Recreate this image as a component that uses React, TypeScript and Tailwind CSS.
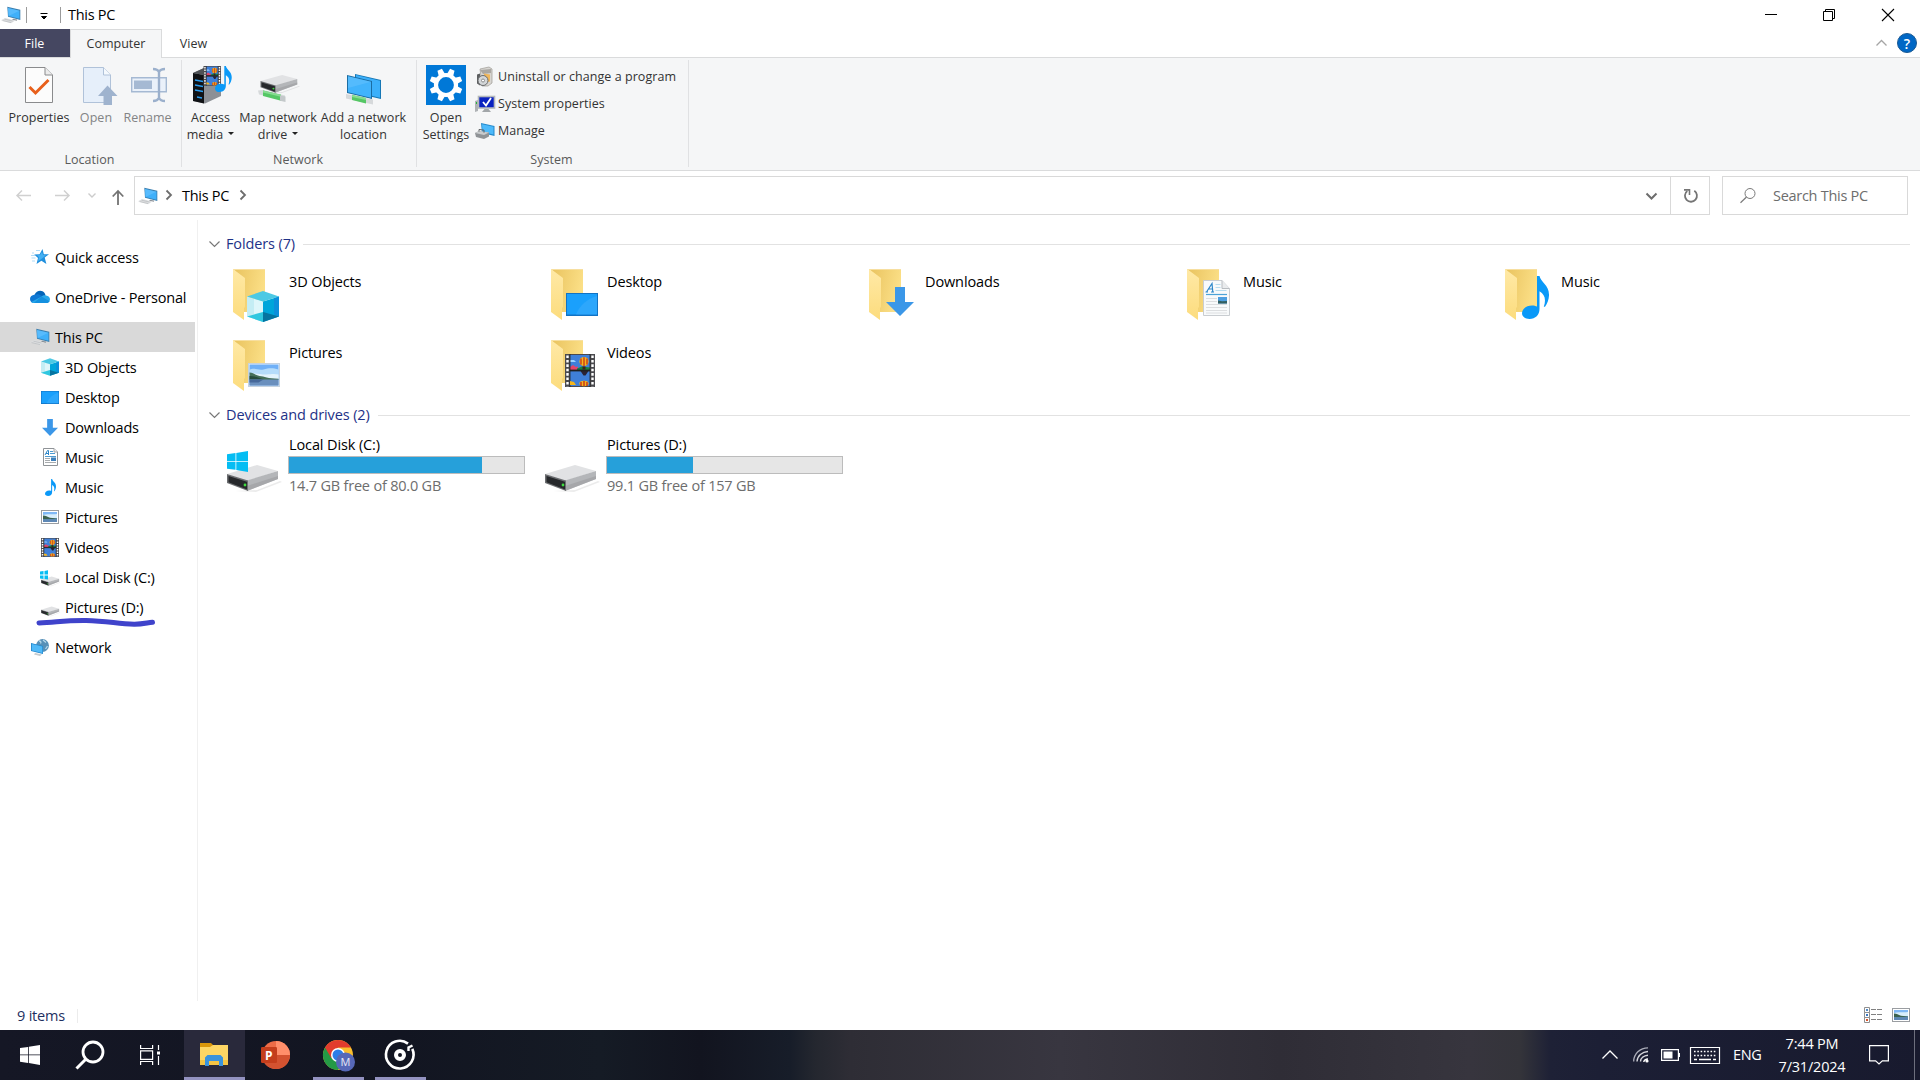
import React from "react";

type IconProps = { className?: string };
const svg = "block shrink-0 overflow-visible";

function PcIcon({ className = "w-5 h-[18px]" }: IconProps) {
  return (
    <svg viewBox="0 0 20 18" className={`${svg} ${className}`}>
      <path d="M6.300.8 19.300 3.800V14L7 10.800z" fill="#3a7fb0" />
      <path d="M7 2 18.500 4.700v8L7.500 10z" fill="#3fb0fa" />
      <path d="M7 2 18.500 4.700 8 9.800H7.500z" fill="#6cc5ff" opacity=".55" />
      <path d="M12 12.700l4 .9v1.200l-5-1z" fill="#8c9299" />
      <path d="M0 14.200 4.200 12l10 2.400-4 2.800z" fill="#dcdee0" />
      <path d="M1.500 14.600l8.500 2M3.500 13.200l8 1.800" stroke="#b9bcbf" strokeWidth=".7" />
    </svg>
  );
}

function FilmArt() {
  return (
    <g>
      <rect width="30" height="33" fill="#4a4a4e" />
      <rect x="5" y="1" width="20" height="15" fill="#3f7fd8" />
      <rect x="5" y="17" width="20" height="15" fill="#3f7fd8" />
      <path d="M5 13l3-2 3 2 2-.5v3.500H5z" fill="#e2456a" />
      <path d="M12 14.500l5-2 8 1v2.500H12z" fill="#17803f" />
      <path d="M5 6h4l2 2H5z" fill="#9cd2ff" />
      <ellipse cx="19" cy="7.500" rx="4.600" ry="4.600" fill="#f5b51c" />
      <path d="M19 3.2v9M16 4.500v6M22 4.500v6" stroke="#c2271c" strokeWidth="1.200" />
      <path d="M17.500 12.500h3v3h-3z" fill="#3d2418" />
      <path d="M15.500 17h8l-3 4.500h-2z" fill="#2a2233" />
      <path d="M5 16h20v1H5zM5 0v33M25 0v33" fill="#222" stroke="#222" strokeWidth=".8" />
      <ellipse cx="19" cy="29.500" rx="4.600" ry="2.800" fill="#f5b51c" />
      <path d="M19 27v5M16 28v4M22 28v4" stroke="#c2271c" strokeWidth="1.3" />
      <path d="M5 27l4 1 2 3H5z" fill="#f5b51c" />
      <path d="M2.5 1.5v31M27.5 1.5v31" stroke="#fff" strokeWidth="2.4" strokeDasharray="2.6 1.8" />
    </g>
  );
}

function VideoIcon({ className = "w-[18px] h-[19px]" }: IconProps) {
  return (
    <svg viewBox="0 0 30 33" preserveAspectRatio="none" className={`${svg} ${className}`}>
      <FilmArt />
    </svg>
  );
}

function PictureIcon({ className = "w-[18px] h-[14px]" }: IconProps) {
  return (
    <svg viewBox="0 0 18 14" preserveAspectRatio="none" className={`${svg} ${className}`}>
      <rect x=".5" y=".5" width="17" height="13" fill="#fff" stroke="#9a9da1" />
      <rect x="2" y="2" width="14" height="10" fill="#7fb8f5" />
      <path d="M2 5c4-1.500 9 0 14-1v4H2z" fill="#d8eefb" />
      <path d="M2 5.500c3 0 4 1.500 7 2.300l7 .7v1H2z" fill="#3c6350" />
      <path d="M2 9.300h14V12H2z" fill="#5d87b5" />
    </svg>
  );
}

function LargePictureIcon({ className = "" }: IconProps) {
  return (
    <svg viewBox="0 0 32 24" className={`${svg} ${className}`}>
      <rect x=".5" y=".5" width="31" height="23" fill="#eef4fa" stroke="#c5d2df" />
      <rect x="1.500" y="1.500" width="29" height="21" fill="#6fb0f7" />
      <path d="M1.500 7c5-3 9 1 14-.5s9-2 15 0V15h-29z" fill="#b5dcfa" />
      <path d="M1.500 11c6-1.500 12 1 17 .5s8-1 12 0V16h-29z" fill="#e3f3fc" />
      <path d="M1.500 9.500c4 0 6 3 10 3.500 5 .5 8 2.500 19 2.800V17h-29z" fill="#46705a" />
      <path d="M1.500 13c6 0 10 2 15 3.500h-15z" fill="#274c3d" />
      <path d="M1.500 16.500h29v6h-29z" fill="#6a8fbd" />
      <path d="M1.500 16.500h14l-5 3h-9z" fill="#46689a" />
    </svg>
  );
}

function NoteArt() {
  return (
    <path
      d="M15 0h2.500c1 6 10 9 9.500 19-.2 4-1.700 8-4 11h-1.200c2.500-7 1-12-4.300-15v17c0 6-4 10-10 10-4.500 0-7.500-2.300-7.500-5.500 0-4.500 4.500-7.800 10-7.800 2 0 3.600.4 5 1.200z"
      fill="#0a99f8"
    />
  );
}

function NoteIcon({ className = "w-[11px] h-[17px]" }: IconProps) {
  return (
    <svg viewBox="0 0 27 42" preserveAspectRatio="none" className={`${svg} ${className}`}>
      <NoteArt />
    </svg>
  );
}

function CubeIcon({ className = "w-[18px] h-[18px]" }: IconProps) {
  return (
    <svg viewBox="0 0 32 31" className={`${svg} ${className}`}>
      <path d="M0 5.500 16 10.500V31L0 25.500z" fill="#c4edf4" />
      <path d="M7 7.800 16 10.500V21L7 23z" fill="#def6fa" />
      <path d="M16 10.500 32 5.500v20L16 31z" fill="#00a5da" />
      <path d="M27 7l5-1.500v20L27 23.600z" fill="#0c8fdb" />
      <path d="M0 5.500 16 0l16 5.500-16 5z" fill="#4cc9e4" />
      <path d="M0 25.500 16 21v10z" fill="#2fc7e0" />
      <path d="M16 21l16 4.500L16 31z" fill="#0673a0" />
    </svg>
  );
}

function DesktopIcon({ className = "w-[18px] h-[13px]" }: IconProps) {
  return (
    <svg viewBox="0 0 32 23" preserveAspectRatio="none" className={`${svg} ${className}`}>
      <rect width="32" height="23" fill="#1273c4" />
      <rect x="1" y="1" width="30" height="20.500" fill="#1aa0fc" />
      <path d="M10 21.500C14 12 21 6 31 3v18.500z" fill="#3babfb" opacity=".6" />
    </svg>
  );
}

function DownIcon({ className = "w-[16px] h-[17px]" }: IconProps) {
  return (
    <svg viewBox="0 0 28 29" preserveAspectRatio="none" className={`${svg} ${className}`}>
      <path d="M9 0h10v15h9L14 29 0 15h9z" fill="#3b97e8" />
    </svg>
  );
}

function DocIcon() {
  return (
    <svg viewBox="0 0 15 18" className={`${svg} w-[15px] h-[18px]`}>
      <path d="M.5.5H11l3.500 3.500v13.500H.5z" fill="#fff" stroke="#8f9397" />
      <path d="M11 .5V4h3.500" fill="#eee" stroke="#8f9397" strokeWidth=".8" />
      <path d="M2 7 4.500 2.500H5.500V7M3 5.500h2.500" stroke="#2b86c9" fill="none" />
      <path d="M7 3.500h3M7 5.500h5M2 8.500h11" stroke="#4e9bd0" />
      <path d="M2 10.500h5M2 12.500h5M2 14.500h11" stroke="#9da1a5" strokeWidth=".9" />
      <rect x="8" y="9.500" width="5" height="3.500" fill="#3d80bb" />
    </svg>
  );
}

function LargeDocIcon({ className = "" }: IconProps) {
  return (
    <svg viewBox="0 0 27 36" className={`${svg} ${className}`}>
      <path d="M.5.5H19l7.500 8v27H.5z" fill="#f8fafb" stroke="#c9cdd1" />
      <path d="M19 .5v8h7.500" fill="#e9ebed" stroke="#b9bdc1" />
      <path d="M3.500 12 9 3.500l.8 8.500M5.800 9h4M2.500 12h2.500M8 12h3" stroke="#2b86c9" strokeWidth="1.200" fill="none" />
      <path d="M12.500 4.500h5M12.500 7.500h5M12.500 10.500h11" stroke="#b8dcee" />
      <path d="M3 14.500h21" stroke="#4ca3d8" strokeWidth="1.200" />
      <path d="M3 18.500h11M3 21.500h11M3 24.500h21M3 27.500h21M3 30.500h21M3 33h21" stroke="#dcdee0" />
      <rect x="15" y="17" width="9" height="6.500" fill="#4d9fe0" />
      <path d="M15 20.500l4 .8 5-.3v2.500h-9z" fill="#325f60" />
    </svg>
  );
}

function DriveArt() {
  return (
    <g>
      <path d="M8 26l22-1 23-9 2 1-26 10z" fill="#000" opacity=".08" />
      <path d="M0 9 30 0l21 6-31 10z" fill="#e1e2e4" />
      <path d="M20 15.500 51 6v8L20 26z" fill="#b4b6b9" />
      <path d="M20 21 51 11v3L20 26z" fill="#9fa1a4" opacity=".7" />
      <path d="M0 9l21 6.500V26L0 18z" fill="#6c6e71" />
      <path d="M1.500 11 20 16.700v7.800L1.500 17.300z" fill="#26282b" />
      <circle cx="18" cy="20" r="1.400" fill="#3fdc3f" />
    </g>
  );
}

function WinLogo({ fill }: { fill: string }) {
  return <path d="M0 3.200 8.500 2v8H0zM9.300 1.900 21 0v10H9.300zM0 10.800h8.500v8L0 17.700zM9.300 10.800H21V21L9.300 19z" fill={fill} />;
}

function DriveIcon({ win = false }: { win?: boolean }) {
  return (
    <svg viewBox="0 0 52 40" className={`${svg} w-[52px] h-10`}>
      <g transform="translate(0 14)">
        <DriveArt />
      </g>
      {win && <WinLogo fill="#05bdf3" />}
    </svg>
  );
}

function SmallDriveIcon({ win = false }: { win?: boolean }) {
  return (
    <svg viewBox="0 0 20 16" className={`${svg} mt-px w-5 h-4`}>
      <g transform="translate(1 6.500) scale(.355 .36)">
        <DriveArt />
      </g>
      {win && <path d="M0 1.500 3.500 1v3.500H0zM4.500.900 8 .3v4.200H4.500zM0 5.500h3.500V9L0 8.500zM4.500 5.500H8v4l-3.500-.4z" fill="#05bdf3" />}
    </svg>
  );
}

function StarIcon() {
  return (
    <svg viewBox="0 0 18 16" className={`${svg} w-[18px] h-4`}>
      <path d="M11.500 0l1.300 5.200 5.200.1-4.300 3.200 1.700 6.500-5-3.300L5.500 15l1.500-6L3.200 5.500l5.400-.3z" fill="#1f8fdd" />
      <path d="M11 3l1 3 3 .2-5 4-3 2 1-4-2-2 3-.2z" fill="#45b0f2" />
      <path d="M1 4h2M0 6.500h4M.5 9h4M1 12h3M5 1.500h4" stroke="#8ccbf3" strokeWidth=".7" />
    </svg>
  );
}

function CloudIcon() {
  return (
    <svg viewBox="0 0 20 13" className={`${svg} w-5 h-[13px] -mt-[2px]`}>
      <path d="M4.500 5C6 1 10 0 12.500 1.300c1.800 1 2.700 2.500 3 4.200L8 10z" fill="#0364b8" />
      <path d="M4.300 4.700C2 5 0 6.500 0 9c0 2.500 2 4 4 4L12 6C9 3.800 6.500 4 4.300 4.700z" fill="#0f78d4" />
      <path d="M11.500 6.500C13 5 15 5 16 5.600c2.500.2 4 1.900 4 3.700 0 2.200-1.700 3.700-3.700 3.700H4c-1.200 0-2-.3-2.700-1z" fill="#28a8ea" />
      <path d="M3.800 13h12.500c1.500 0 2.700-.7 3.300-1.800L11.500 6.500z" fill="#1490df" />
    </svg>
  );
}

function GlobeIcon() {
  return (
    <svg viewBox="0 0 18 17" className={`${svg} w-[18px] h-[17px]`}>
      <circle cx="11.500" cy="6.500" r="6.400" fill="#5790b8" />
      <path d="M8 2c1.500 0 2.500 1 1.500 2.500M12 1l3 2.500M14.500 10l2-3" stroke="#b5d8ea" strokeWidth="1.300" fill="none" />
      <path d="M0 4l12 3v8L0 12z" fill="#1f86cc" />
      <path d="M.8 5 11.300 7.600v6.300L.8 11.400z" fill="#50b9f8" />
      <path d="M4 14l7 1.500-2 1.500-6-1.500z" fill="#c6cacd" />
    </svg>
  );
}

function Folder({ children }: { children: React.ReactNode }) {
  return (
    <span className="relative block h-[54px] w-[50px] shrink-0">
      <svg viewBox="0 0 50 54" className={`${svg} w-[50px] h-[54px]`}>
        <defs>
          <linearGradient id="back" x1="0" x2="1" y1="0" y2=".3">
            <stop offset="0" stopColor="#e9c35f" />
            <stop offset="1" stopColor="#fbdf86" />
          </linearGradient>
          <linearGradient id="flap" x1="0" x2="0" y1="0" y2="1">
            <stop offset="0" stopColor="#ffe9a6" />
            <stop offset="1" stopColor="#fcdc7d" />
          </linearGradient>
        </defs>
        <path d="M1 0h31v43H11z" fill="url(#back)" />
        <path d="M0 .5h32" stroke="#f7dfa0" />
        <path d="M0 0l12 9v29l-1 1v12L0 43z" fill="url(#flap)" />
      </svg>
      {children}
    </span>
  );
}

function Chevron({ dir, color, w, className = "" }: { dir: "up" | "down" | "right"; color: string; w: number; className?: string }) {
  const d = { up: "M.5 5.500 5.500.5l5 5", down: "M.5.5l5 5 5-5", right: "M.5.500l4.500 4.500L.5 9.500" }[dir];
  const box = dir === "right" ? "0 0 6 10" : "0 0 11 6";
  const size = dir === "right" ? "w-[6px] h-[10px]" : "w-[11px] h-[6px]";
  return (
    <svg viewBox={box} className={`${svg} ${size} ${className}`}>
      <path d={d} fill="none" stroke={color} strokeWidth={w} />
    </svg>
  );
}

function TitleBar() {
  return (
    <header className="flex h-[29px] items-center bg-white text-[14.5px] tracking-[-0.3px]">
      <PcIcon className="ml-px mt-px w-5 h-[18px]" />
      <span className="ml-[5px] h-4 w-px bg-[#9b9b9b]" />
      <svg viewBox="0 0 8 7" className={`${svg} ml-[13px] mt-1 w-2 h-[7px]`}>
        <path d="M.5.500h7M1.500 3.500h5L4 6z" fill="#000" stroke="#000" />
      </svg>
      <span className="ml-[12px] h-4 w-px bg-[#9b9b9b]" />
      <span className="ml-[7px]">This PC</span>
      <div className="ml-auto mr-[26px] flex items-center">
        <svg viewBox="0 0 12 12" className={`${svg} w-3 h-3`}><path d="M0 5.500h12" stroke="#000" /></svg>
        <svg viewBox="0 0 12 12" className={`${svg} ml-[46px] w-3 h-3`}><path d="M.5 2.500h9v9h-9zM2.500 2.500v-2h9v9h-2" fill="none" stroke="#000" /></svg>
        <svg viewBox="0 0 12 12" className={`${svg} ml-[47px] w-3 h-3`}><path d="M0 0l12 12M12 0 0 12" stroke="#000" strokeWidth="1.100" /></svg>
      </div>
    </header>
  );
}

function TabRow() {
  return (
    <div className="flex h-[28px] text-[12.5px] text-[#333]">
      <span className="flex w-[70px] items-center justify-center bg-[#454761] pr-px pt-[2px] text-white">File</span>
      <span className="relative z-10 flex h-[29px] w-[92px] items-center justify-center border border-b-0 border-[#dadbdc] bg-[#f5f6f7] pt-px">Computer</span>
      <span className="flex w-[63px] items-center justify-center pt-[2px]">View</span>
      <span className="ml-auto flex items-center">
        <Chevron dir="up" color="#a5a5a5" w={1.3} className="mr-[10px]" />
        <span className="mr-[3px] flex h-5 w-5 items-center justify-center rounded-full border border-[#1b5a94] bg-[#0067c5] text-[14px] font-semibold text-white">?</span>
      </span>
    </div>
  );
}

function BigButton({ icon, lines, width, disabled, arrow }: { icon: React.ReactNode; lines: string[]; width: string; disabled?: boolean; arrow?: boolean }) {
  return (
    <div className={`flex flex-col items-center whitespace-nowrap ${width} ${disabled ? "text-[#838485]" : "text-[#333]"}`}>
      <span className="mb-[4px] flex h-[48px] items-center justify-center pt-[6px]">{icon}</span>
      {lines.map((l, i) => (
        <span key={l} className="flex h-[17px] items-center gap-[5px]">
          {l}
          {arrow && i === 1 && (
            <svg viewBox="0 0 6 3" className={`${svg} w-[6px] h-[3px] -mt-[4px]`}><path d="M0 0h6L3 3z" fill="#222" /></svg>
          )}
        </span>
      ))}
    </div>
  );
}

function Group({ label, width, children }: { label: string; width: string; children: React.ReactNode }) {
  return (
    <section className={`flex flex-col ${width}`}>
      <div className="flex h-[93px]">{children}</div>
      <div className="flex h-[18px] items-center justify-center pr-[2px] text-[#5a5a5a]">{label}</div>
    </section>
  );
}

const Divider = () => <span className="mt-[2px] h-[107px] w-px bg-[#e0e1e3]" />;

const PropertiesIcon = () => (
  <svg viewBox="0 0 28 36" className={`${svg} w-7 h-9`}>
    <path d="M.5.5H20l7.500 7.500v27.500H.5z" fill="#fcfcfc" stroke="#8a8b8d" />
    <path d="M20 .5V8h7.500" fill="#ececec" stroke="#8a8b8d" />
    <path d="M4.500 20l6 6L23.500 13" stroke="#e8601c" strokeWidth="3" fill="none" />
  </svg>
);
const OpenIcon = () => (
  <svg viewBox="0 0 34 38" className={`${svg} ml-[8px] mt-[2px] w-[34px] h-[38px]`}>
    <path d="M.5.5h20l7 7.500v27.500H.5z" fill="#e6effa" stroke="#b0c2d9" />
    <path d="M20.500.5V8h7" fill="#f5f9fd" stroke="#b0c2d9" />
    <path d="M24.500 18.500 34.500 29H29v9h-8.500v-9H15z" fill="#9fb3ce" />
  </svg>
);
const RenameIcon = () => (
  <svg viewBox="0 0 36 34" className={`${svg} ml-[2px] w-9 h-[34px]`}>
    <path d="M.7 9.700h34.600v14H.7z" fill="#eaf1fa" stroke="#a5b9d3" strokeWidth="1.400" />
    <path d="M3 12.500h18v8.500H3z" fill="#a5b9d3" />
    <path d="M22 1c3 0 5 1 6 3 1-2 3-3 6-3M28 4v26M22 33c3 0 5-1 6-3 1 2 3 3 6 3" stroke="#9bb0cc" strokeWidth="2.400" fill="none" />
  </svg>
);
const MediaIcon = () => (
  <svg viewBox="0 0 40 40" className={`${svg} ml-[3px] w-10 h-10`}>
    <path d="M1 8 12 3h17v28l-16 7.500L1 36z" fill="#8c9096" />
    <path d="M1 8l11 2v28.500L1 36z" fill="#101215" />
    <path d="M1 8 12 3h12l-12 7z" fill="#4e5257" />
    <path d="M3 15l8 1.500M3 20l8 1.500M3 25l8 1.500M5 32l5 1" stroke="#2a9df0" strokeWidth="1.300" />
    <g transform="translate(11.500 1) scale(.58 .6)"><FilmArt /></g>
    <g transform="translate(23 1) scale(.62)"><NoteArt /></g>
  </svg>
);
const MapDriveIcon = () => (
  <svg viewBox="0 0 40 30" className={`${svg} mt-[9px] w-10 h-[30px]`}>
    <path d="M0 15.500 5 15l22 5.500v5L1 19.500z" fill="#d6d9db" />
    <path d="M5 15.500l18 4.300v6L5 21z" fill="#55c765" />
    <path d="M5 15.500l18 4.300v2L5 17.500z" fill="#86dd90" />
    <path d="M22 20.500l5.500 1v5.500l-5.500-1.200z" fill="#c3c8ca" />
    <g transform="translate(2.500 0) scale(.72 .68)"><DriveArt /></g>
  </svg>
);
const AddNetIcon = () => (
  <svg viewBox="0 0 36 32" className={`${svg} mt-[7px] ml-px w-9 h-8`}>
    <path d="M9 1l26 6v19L9 20z" fill="#1677b5" />
    <path d="M10 2l24 5.700v17L10 19z" fill="#3cb0fb" />
    <path d="M1 2l25 6v18L1 20z" fill="#1b6da3" />
    <path d="M2 3.300l23 5.500v16L2 19.300z" fill="#41b3fc" />
    <path d="M2 3.300l23 5.500L2 15z" fill="#6dc6ff" opacity=".45" />
    <path d="M0 21l27 5.500v5L0 25.500z" fill="#d6d9db" />
    <path d="M6 22l14 3v5.500L6 27z" fill="#55c765" />
    <path d="M6 22l14 3v2L6 24z" fill="#86dd90" />
  </svg>
);
const GearIcon = () => (
  <svg viewBox="0 0 40 40" className={`${svg} w-10 h-10`}>
    <rect width="40" height="40" fill="#0078d7" />
    <g fill="#fff">
      {[22.5, 67.5, 112.5, 157.5, 202.5, 247.5, 292.5, 337.5].map((a) => (
        <path key={a} d="M16.600 10 17.600 3.500h4.800L23.400 10z" transform={`rotate(${a} 20 20)`} />
      ))}
    </g>
    <circle cx="20" cy="20" r="10" fill="none" stroke="#fff" strokeWidth="4.200" />
  </svg>
);
const UninstallIcon = () => (
  <svg viewBox="0 0 20 20" className={`${svg} w-5 h-5`}>
    <path d="M5 2l9-2 3 2v14l-4 3H7z" fill="#d8d6d2" stroke="#9c9994" strokeWidth=".7" />
    <path d="M5 3l11-1v4L8 7z" fill="#aaa7a2" />
    <path d="M9 6.500l6 1v7l-6 1z" fill="#f0b75c" />
    <path d="M2 7.500l3-1v12l-3-2z" fill="#5c5e60" />
    <circle cx="8" cy="13.500" r="5" fill="#d3d6d8" stroke="#696b6d" />
    <circle cx="8" cy="13.500" r="1.500" fill="#fff" stroke="#777" strokeWidth=".8" />
  </svg>
);
const SysPropIcon = () => (
  <svg viewBox="0 0 20 18" className={`${svg} w-5 h-[18px]`}>
    <path d="M0 6l3-1v11l-3 1z" fill="#aeb2b5" />
    <path d="M1 7h1v2H1z" fill="#25b53a" />
    <rect x="3.500" y="1.500" width="16" height="11.500" fill="#0a22c0" stroke="#b4b8bb" strokeWidth="1.600" />
    <path d="M8 7l3 3.500 5-7.500" stroke="#fff" strokeWidth="1.800" fill="none" />
    <path d="M9.500 14h4l2.500 3H7z" fill="#a2a6a9" />
  </svg>
);
const ManageIcon = () => (
  <svg viewBox="0 0 20 16" className={`${svg} w-5 h-4`}>
    <path d="M6 0l13.500 3v10L7 10z" fill="#2389cc" />
    <path d="M7 1.200 18.500 3.800v7.800L7.500 9z" fill="#4dbafb" />
    <path d="M0 10l4-2 10 1.500v4L9 16l-8-2z" fill="#8f9396" />
    <path d="M0 10l4-2 10 1.500-5 2.500z" fill="#c8cbcd" />
    <path d="M4 8.500V6.500l5 .6v2.500" stroke="#5d6062" fill="none" />
  </svg>
);

function Ribbon() {
  const rows: [React.ReactNode, string][] = [
    [<UninstallIcon key="u" />, "Uninstall or change a program"],
    [<SysPropIcon key="s" />, "System properties"],
    [<ManageIcon key="m" />, "Manage"],
  ];
  return (
    <div className="flex h-[114px] border-y border-[#dadbdc] bg-[#f5f6f7] text-[12.5px] tracking-[0.05px]">
      <Group label="Location" width="w-[181px]">
        <BigButton width="w-[78px]" icon={<PropertiesIcon />} lines={["Properties"]} />
        <BigButton width="w-[36px]" icon={<OpenIcon />} lines={["Open"]} disabled />
        <BigButton width="w-[67px]" icon={<RenameIcon />} lines={["Rename"]} disabled />
      </Group>
      <Divider />
      <Group label="Network" width="w-[234px]">
        <BigButton width="w-[57px]" icon={<MediaIcon />} lines={["Access", "media"]} arrow />
        <BigButton width="w-[78px]" icon={<MapDriveIcon />} lines={["Map network", "drive"]} arrow />
        <BigButton width="w-[93px]" icon={<AddNetIcon />} lines={["Add a network", "location"]} />
      </Group>
      <Divider />
      <Group label="System" width="w-[271px]">
        <BigButton width="w-[58px]" icon={<GearIcon />} lines={["Open", "Settings"]} />
        <div className="flex flex-col pt-[5px] text-[#333]">
          {rows.map(([icon, label]) => (
            <div key={label} className="flex h-[27px] items-center gap-[3px] whitespace-nowrap">
              {icon}
              <span className="pt-[2px]">{label}</span>
            </div>
          ))}
        </div>
      </Group>
      <Divider />
    </div>
  );
}

function AddressRow() {
  return (
    <div className="flex h-[49px] items-start bg-white pt-[5px] text-[14.5px] tracking-[-0.28px]">
      <div className="flex h-[39px] w-[134px] shrink-0 items-center">
        <svg viewBox="0 0 15 11" className={`${svg} ml-4 w-[15px] h-[11px]`}><path d="M15 5.500H1M6 .5l-5 5 5 5" fill="none" stroke="#d0d0d0" strokeWidth="1.500" /></svg>
        <svg viewBox="0 0 15 11" className={`${svg} ml-6 w-[15px] h-[11px]`}><path d="M0 5.500h14M9 .5l5 5-5 5" fill="none" stroke="#d0d0d0" strokeWidth="1.500" /></svg>
        <svg viewBox="0 0 8 5" className={`${svg} ml-[18px] w-2 h-[5px]`}><path d="M.5.500 4 4 7.500.5" fill="none" stroke="#ccc" strokeWidth="1.400" /></svg>
        <svg viewBox="0 0 12 15" className={`${svg} ml-4 mt-[3px] w-3 h-[15px]`}><path d="M6 15V1M.7 6.500 6 1l5.300 5.500" fill="none" stroke="#737373" strokeWidth="1.800" /></svg>
      </div>
      <div className="flex h-[39px] w-[1537px] items-center border border-[#d9d9d9]">
        <PcIcon className="ml-[3px] w-5 h-[18px]" />
        <Chevron dir="right" color="#6d6d6d" w={1.8} className="ml-[8px] -mt-[2px]" />
        <span className="ml-[10px] pt-px">This PC</span>
        <Chevron dir="right" color="#6d6d6d" w={1.8} className="ml-[11px] -mt-[2px]" />
        <Chevron dir="down" color="#6d6d6d" w={2} className="ml-auto mr-[13px] mt-px" />
      </div>
      <div className="flex h-[39px] w-[39px] items-center justify-center border border-l-0 border-[#d9d9d9] pl-[2px]">
        <svg viewBox="0 0 14 14" className={`${svg} w-[14px] h-[14px]`}>
          <path d="M10.300 1.800a6 6 0 1 1-7 .2" fill="none" stroke="#757575" strokeWidth="1.800" />
          <path d="M0 .9h5.500v5" fill="none" stroke="#757575" strokeWidth="1.600" />
        </svg>
      </div>
      <div className="ml-3 flex h-[39px] w-[186px] items-center border border-[#d9d9d9] text-[#6d6d6d]">
        <svg viewBox="0 0 16 15" className={`${svg} ml-[17px] -mt-px w-4 h-[15px]`}><circle cx="10" cy="5.500" r="5" fill="none" stroke="#7a7a7a" /><path d="M6.500 9 .500 14.700" stroke="#7a7a7a" strokeWidth="1.200" /></svg>
        <span className="ml-[17px] pt-px">Search This PC</span>
      </div>
    </div>
  );
}

function NavItem({ icon, label, level = 0, active }: { icon: React.ReactNode; label: string; level?: number; active?: boolean }) {
  return (
    <div className={`flex h-[30px] w-[195px] items-center whitespace-nowrap ${active ? "bg-[#d9d9d9]" : ""} ${level ? "pl-10" : "pl-[30px]"}`}>
      <span className="mr-[5px] flex w-5 shrink-0 items-center justify-center">{icon}</span>
      <span className="pt-px">{label}</span>
    </div>
  );
}

function Sidebar() {
  return (
    <nav className="relative flex h-[781px] w-[198px] shrink-0 flex-col border-r border-[#f0f0f0] pt-[22px] text-[14.5px] tracking-[-0.2px]">
      <NavItem icon={<StarIcon />} label="Quick access" />
      <div className="h-[10px]" />
      <NavItem icon={<CloudIcon />} label="OneDrive - Personal" />
      <div className="h-[10px]" />
      <NavItem icon={<PcIcon />} label="This PC" active />
      <NavItem level={1} icon={<CubeIcon />} label="3D Objects" />
      <NavItem level={1} icon={<DesktopIcon />} label="Desktop" />
      <NavItem level={1} icon={<DownIcon />} label="Downloads" />
      <NavItem level={1} icon={<DocIcon />} label="Music" />
      <NavItem level={1} icon={<NoteIcon />} label="Music" />
      <NavItem level={1} icon={<PictureIcon />} label="Pictures" />
      <NavItem level={1} icon={<VideoIcon />} label="Videos" />
      <NavItem level={1} icon={<SmallDriveIcon win />} label="Local Disk (C:)" />
      <NavItem level={1} icon={<SmallDriveIcon />} label="Pictures (D:)" />
      <svg viewBox="0 0 120 10" className="absolute left-[36px] top-[397px] h-[10px] w-[120px]">
        <path d="M3 6C20 5.500 28 3.200 50 3.500c22 .5 32 3.500 48 3.700 8 .1 12-1.200 18.500-2" fill="none" stroke="#3f43cb" strokeWidth="5" strokeLinecap="round" />
      </svg>
      <div className="h-[10px]" />
      <NavItem icon={<GlobeIcon />} label="Network" />
    </nav>
  );
}

function Heading({ label }: { label: string }) {
  return (
    <div className="flex h-5 items-center text-[#1e3287]">
      <Chevron dir="down" color="#777" w={1.2} className="mr-[6px]" />
      <span className="h-5 leading-5">{label}</span>
      <span className="ml-[8px] h-px flex-1 bg-[#e2e2e2]" />
    </div>
  );
}

function FolderItem({ label, children }: { label: string; children: React.ReactNode }) {
  return (
    <div className="flex h-[71px] w-[318px]">
      <Folder>{children}</Folder>
      <span className="ml-[6px] mt-[3px] h-5 leading-5">{label}</span>
    </div>
  );
}

function Drive({ label, free, used, win }: { label: string; free: string; used: number; win?: boolean }) {
  return (
    <div className="flex w-[318px]">
      <span className="ml-px mt-[16px] mr-[9px]"><DriveIcon win={win} /></span>
      <div className="flex flex-col">
        <span className="ml-px h-5 leading-5">{label}</span>
        <span className="mt-px h-[18px] w-[237px] border border-[#bcbcbc] bg-[#e6e6e6]">
          <span className="block h-full bg-[#26a0da]" style={{ width: `${used}px` }} />
        </span>
        <span className="ml-px mt-[2px] h-5 leading-5 tracking-[-0.2px] text-[#6d6d6d]">{free}</span>
      </div>
    </div>
  );
}

function Content() {
  return (
    <main className="flex-1 pl-[11px] pr-[10px] pt-[14px] text-[14.5px] tracking-[-0.12px]">
      <Heading label="Folders (7)" />
      <div className="flex flex-wrap pl-6 pt-[15px]">
        <FolderItem label="3D Objects"><CubeIcon className="absolute left-[14px] top-[22px] h-[31px] w-8" /></FolderItem>
        <FolderItem label="Desktop"><DesktopIcon className="absolute left-[15px] top-6 h-[23px] w-8" /></FolderItem>
        <FolderItem label="Downloads"><DownIcon className="absolute left-[17px] top-[18px] h-[29px] w-7" /></FolderItem>
        <FolderItem label="Music"><LargeDocIcon className="absolute left-4 top-[11px] h-9 w-[27px]" /></FolderItem>
        <FolderItem label="Music"><NoteIcon className="absolute left-[17px] top-[7px] h-[43px] w-[27px]" /></FolderItem>
        <FolderItem label="Pictures"><LargePictureIcon className="absolute left-[15px] top-[23px] h-6 w-8" /></FolderItem>
        <FolderItem label="Videos"><VideoIcon className="absolute left-[14px] top-[14px] h-[33px] w-[30px]" /></FolderItem>
      </div>
      <div className="-mt-[6px]"><Heading label="Devices and drives (2)" /></div>
      <div className="flex pl-[17px] pt-[10px]">
        <Drive label="Local Disk (C:)" free="14.7 GB free of 80.0 GB" used={193} win />
        <Drive label="Pictures (D:)" free="99.1 GB free of 157 GB" used={86} />
      </div>
    </main>
  );
}

function StatusBar() {
  return (
    <div className="flex h-[28px] items-center text-[14.5px] tracking-[-0.2px] text-[#1e2f5f]">
      <span className="-mt-px ml-[17px] w-[60px]">9 items</span>
      <span className="-mt-px h-[14px] w-px bg-[#ececec]" />
      <svg viewBox="0 0 18 16" className={`${svg} -mt-[2px] ml-auto w-[18px] h-4`}>
        <path d="M.5.500h5v5h-5zM.5 5.500h5v5h-5zM.5 10.500h5v5h-5z" fill="#fff" stroke="#909090" />
        <path d="M2 2h2v2H2z" fill="#4e8ac7" /><path d="M2 7h2v2H2z" fill="#3d7ac0" /><path d="M2 12h2v2H2z" fill="#d9532a" />
        <path d="M7 2.500h5M13 2.500h5M7 7.500h5M13 7.500h5M7 12.500h5M13 12.500h5" stroke="#808080" />
      </svg>
      <PictureIcon className="-mt-[2px] ml-[10px] mr-[10px] w-[18px] h-[14px]" />
    </div>
  );
}

function TaskTile({ children, width, active, bar }: { children: React.ReactNode; width: string; active?: boolean; bar?: string }) {
  return (
    <div className={`relative flex h-[50px] items-center justify-center ${width} ${active ? "bg-[#29293b]" : ""}`}>
      {children}
      {bar && <span className={`absolute bottom-0 h-[3px] bg-[#9392c0] ${bar}`} />}
    </div>
  );
}

function Taskbar() {
  return (
    <footer className="flex h-[50px] items-center bg-[linear-gradient(90deg,#151725_0px,#121521_400px,#151b25_600px,#12141f_700px,#171d29_790px,#24272f_815px,#2e2d35_850px,#383640_1060px,#2f2d36_1280px,#37353e_1470px,#34343a_1520px,#1e2136_1550px,#1c1f35_1600px,#181a2e_1920px)] text-white">
      <TaskTile width="w-[60px]">
        <svg viewBox="0 0 21 21" className={`${svg} w-5 h-5`}><WinLogo fill="#fff" /></svg>
      </TaskTile>
      <TaskTile width="w-[60px]">
        <svg viewBox="0 0 30 30" className={`${svg} w-[30px] h-[30px]`}><circle cx="18" cy="12" r="10" fill="none" stroke="#fff" strokeWidth="2.800" /><path d="M11 19 1.500 28.500" stroke="#fff" strokeWidth="3" /></svg>
      </TaskTile>
      <TaskTile width="w-[64px]">
        <svg viewBox="0 0 20 20" className={`${svg} -ml-1 w-5 h-5`}>
          <path d="M.6 0v3.500h12V0M.6 20v-3.500h12V20M.6 5.800h12v8.500H.6zM18.500 0v5M18.500 11v9" fill="none" stroke="#fff" strokeWidth="1.200" />
          <path d="M17 6.500h3v3h-3z" fill="#fff" />
        </svg>
      </TaskTile>
      <TaskTile width="w-[61px]" active bar="left-0 w-[61px]">
        <svg viewBox="0 0 28 24" className={`${svg} -ml-px -mt-px w-7 h-6`}>
          <path d="M0 0h11l2 2v5H0z" fill="#d9960a" />
          <path d="M0 4h10l3-2h15v20H0z" fill="#fdd664" />
          <path d="M0 17h28v5H0z" fill="#f5c443" />
          <path d="M5 23V14.500L7.500 12h13l2.500 2.500V23h-4v-5h-10v5z" fill="#3a93dc" />
        </svg>
      </TaskTile>
      <TaskTile width="w-[62px]">
        <svg viewBox="0 0 29 28" className={`${svg} -ml-px w-[29px] h-7`}>
          <circle cx="15" cy="14" r="14" fill="#ed6c47" />
          <path d="M15 0a14 14 0 0 1 14 14H15z" fill="#ff8f6b" />
          <path d="M1 14h28a14 14 0 0 1-28 0z" fill="#d35230" />
          <rect y="6" width="16" height="16" rx="1.300" fill="#c43e1c" />
          <text x="4" y="18.500" fontFamily="Open Sans" fontWeight="700" fontSize="12" fill="#fff">P</text>
        </svg>
      </TaskTile>
      <TaskTile width="w-[64px]" bar="left-[6px] w-[51px]">
        <svg viewBox="0 0 32 32" className={`${svg} w-8 h-8 mt-px`}>
          <circle cx="15" cy="15" r="15" fill="#fbbf2d" />
          <path d="M15 15 2 7.500A15 15 0 0 0 15 30l6-10z" fill="#249a45" />
          <path d="M2 7.500a15 15 0 0 1 26 0H15l-6.500 11z" fill="#e23c2d" />
          <circle cx="15" cy="15" r="7" fill="#fff" />
          <circle cx="15" cy="15" r="5.500" fill="#2d7de8" />
          <circle cx="22.500" cy="22" r="9.500" fill="#5668b8" />
          <text x="17.500" y="26" fontFamily="Open Sans" fontSize="11" fill="#e6e9f7">M</text>
        </svg>
      </TaskTile>
      <TaskTile width="w-[58px]" bar="left-[4px] w-[51px]">
        <svg viewBox="0 0 30 30" className={`${svg} w-[30px] h-[30px]`}>
          <path d="M23 3.600a13.800 13.800 0 1 0 4.300 5.300" fill="none" stroke="#fff" strokeWidth="2.600" />
          <circle cx="15" cy="15" r="4" fill="none" stroke="#fff" strokeWidth="4" />
          <path d="M23.500 11V7.500l4-2" fill="none" stroke="#fff" strokeWidth="2.400" />
        </svg>
      </TaskTile>
      <div className="ml-auto flex h-full items-center">
        <svg viewBox="0 0 16 9" className={`${svg} -mt-px w-4 h-[9px]`}><path d="M.500 8.500 8 1l7.500 7.500" fill="none" stroke="#fff" strokeWidth="1.300" /></svg>
        <svg viewBox="0 0 16 16" className={`${svg} ml-[15px] w-4 h-4`}>
          <path d="M.7 14.500C.7 7 7 .8 15 .8" stroke="#aaacb8" strokeWidth="1.300" fill="none" />
          <path d="M4 14.500C4.300 9 9 4.700 15 4.500M7.500 14.500C7.700 11 11 8.500 15 8.200" stroke="#d5d6dc" strokeWidth="1.400" fill="none" />
          <path d="M10.800 15c0-1.500 2-3 4.200-3" stroke="#fff" strokeWidth="1.400" fill="none" />
          <circle cx="14" cy="14" r="1.600" fill="#fff" />
        </svg>
        <svg viewBox="0 0 19 12" className={`${svg} ml-[12px] w-[19px] h-3`}><path d="M.6.600h16.800v10.800H.6z" fill="none" stroke="#fff" strokeWidth="1.200" /><path d="M2.500 2.500h9v7h-9zM17.500 4H19v4h-1.500z" fill="#fff" /></svg>
        <svg viewBox="0 0 30 17" className={`${svg} ml-[10px] w-[30px] h-[17px]`}>
          <path d="M.5.500h29v16H.5z" fill="none" stroke="#fff" strokeWidth="1.200" />
          <path d="M4 4.500h22M4 8.500h22" stroke="#fff" strokeWidth="1.500" strokeDasharray="1.600 1.700" />
          <path d="M4 12.500h3M9 12.500h12M23 12.500h3" stroke="#fff" strokeWidth="1.300" />
        </svg>
        <span className="ml-[13px] w-[30px] text-[14.5px] tracking-[-0.3px]">ENG</span>
        <div className="ml-[11px] flex w-[76px] flex-col items-center text-[14.5px] leading-[23px] tracking-[-0.2px]">
          <span>7:44 PM</span>
          <span>7/31/2024</span>
        </div>
        <svg viewBox="0 0 20 20" className={`${svg} ml-[19px] w-5 h-5`}><path d="M.600.600h18.800v15.300h-6L10 19l-3.400-3.100h-6z" fill="none" stroke="#fff" strokeWidth="1.200" /></svg>
        <span className="ml-[25px] mr-[5px] h-full w-px bg-[#6d6f7d]" />
      </div>
    </footer>
  );
}

export default function App() {
  return (
    <div className="flex h-[1080px] w-[1920px] flex-col overflow-hidden bg-white font-['Open_Sans','Noto_Sans',sans-serif] text-black">
      <TitleBar />
      <TabRow />
      <Ribbon />
      <AddressRow />
      <div className="flex h-[782px]">
        <Sidebar />
        <Content />
      </div>
      <StatusBar />
      <Taskbar />
    </div>
  );
}
